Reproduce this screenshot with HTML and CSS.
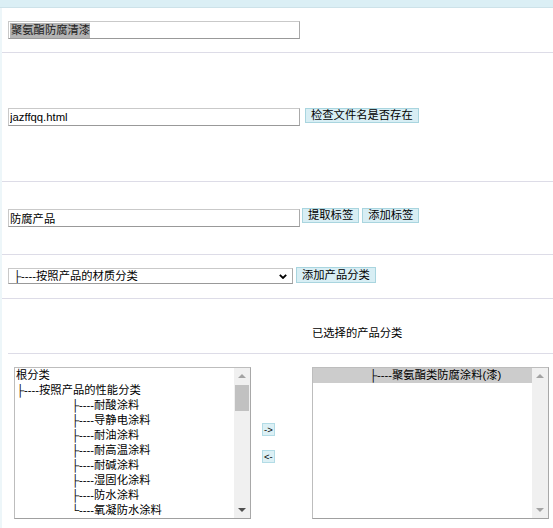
FILE: index.html
```html
<!DOCTYPE html>
<html lang="zh-CN">
<head>
<meta charset="utf-8">
<title>产品编辑</title>
<link rel="stylesheet" href="styles.css">
</head>
<body>
<div class="topbar"></div>
<main class="form">
  <div class="row row-title">
    <div class="field field-title"><span class="sel">聚氨酯防腐清漆</span></div>
  </div>
  <div class="row row-file">
    <input class="field" type="text" value="jazffqq.html">
    <button class="btn btn-check" type="button">检查文件名是否存在</button>
  </div>
  <div class="row row-tags">
    <input class="field" type="text" value="防腐产品">
    <button class="btn btn-tag1" type="button">提取标签</button>
    <button class="btn btn-tag2" type="button">添加标签</button>
  </div>
  <div class="row row-cat">
    <div class="select-wrap">
      <select class="select"><option>├----按照产品的材质分类</option></select>
      <svg class="chev" viewBox="0 0 8 5" width="8" height="5"><polyline points="0.8,0.8 4,4 7.2,0.8" fill="none" stroke="#000" stroke-width="1.8"/></svg>
    </div>
    <button class="btn btn-addcat" type="button">添加产品分类</button>
  </div>
  <div class="picker">
    <div class="picker-head">
      <div></div>
      <div class="picker-title">已选择的产品分类</div>
    </div>
    <div class="picker-body">
      <div class="listbox listbox-left">
        <div class="lb-items">
          <div class="opt">根分类</div>
          <div class="opt">├----按照产品的性能分类</div>
          <div class="opt l2">├----耐酸涂料</div>
          <div class="opt l2">├----导静电涂料</div>
          <div class="opt l2">├----耐油涂料</div>
          <div class="opt l2">├----耐高温涂料</div>
          <div class="opt l2">├----耐碱涂料</div>
          <div class="opt l2">├----湿固化涂料</div>
          <div class="opt l2">├----防水涂料</div>
          <div class="opt l2">└----氧凝防水涂料</div>
        </div>
        <div class="sb">
          <div class="sb-btn"><span class="arr-up"></span></div>
          <div class="sb-track"><div class="thumb"></div></div>
          <div class="sb-btn"><span class="arr-down dark"></span></div>
        </div>
      </div>
      <div class="movers">
        <button class="mv" type="button">-&gt;</button>
        <button class="mv" type="button">&lt;-</button>
      </div>
      <div class="listbox listbox-right">
        <div class="lb-items">
          <div class="opt l2 selected">├----聚氨酯类防腐涂料(漆)</div>
        </div>
        <div class="sb">
          <div class="sb-btn"><span class="arr-up"></span></div>
          <div class="sb-track"></div>
          <div class="sb-btn"><span class="arr-down"></span></div>
        </div>
      </div>
    </div>
  </div>
</main>
</body>
</html>
```

FILE: styles.css
```css
body {
  margin: 0;
  font-family: "Liberation Sans", "Noto Sans CJK SC", sans-serif;
  font-size: 11.3px;
  color: #000;
  background: #fff;
}

.topbar {
  height: 7px;
  background: #dbeff5;
  border-bottom: 1px solid #cde2e9;
}

.form {
  border-left: 2px solid #edf6f9;
  min-height: 520px;
}

.row {
  display: flex;
  align-items: flex-start;
  box-sizing: border-box;
  padding-left: 6px;
  border-bottom: 1px solid #dddce7;
}

.row-title { height: 45px; padding-top: 13px; }
.row-file { height: 129px; padding-top: 55px; }
.row-tags { height: 73px; padding-top: 27px; }
.row-cat { height: 44px; padding-top: 13px; }

.field {
  box-sizing: border-box;
  width: 292px;
  height: 18px;
  margin: 0;
  padding: 0 1px;
  border: 1px solid #c9c9c9;
  border-right-color: #aaa;
  border-bottom-color: #999;
  border-radius: 0;
  font: inherit;
  line-height: 16px;
  color: #000;
  background: #fff;
  outline: none;
}

.field-title {
  display: block;
}

.sel {
  display: inline-block;
  vertical-align: top;
  height: 15px;
  line-height: 15px;
  margin-top: 1px;
  padding-left: 1px;
  background: #b4b4b4;
  color: #222;
}

.btn {
  box-sizing: border-box;
  height: 15px;
  margin: 0;
  padding: 0 5px;
  border: 1px solid #a9d5df;
  border-radius: 0;
  background: #d8eef4;
  font: inherit;
  line-height: 13px;
  color: #000;
}

.btn-check { margin-left: 5px; }
.btn-tag1 { margin-left: 2px; margin-top: -1px; }
.btn-tag2 { margin-left: 3px; margin-top: -1px; }
.btn-addcat { margin-left: 3px; margin-top: -1px; height: 16px; line-height: 14px; }

.select-wrap {
  position: relative;
}

.select {
  -webkit-appearance: none;
  appearance: none;
  display: block;
  box-sizing: border-box;
  width: 285px;
  height: 16px;
  margin: 0;
  padding: 0 0 0 4px;
  border: 1px solid #c9c9c9;
  border-right-color: #aaa;
  border-bottom-color: #999;
  border-radius: 0;
  font: inherit;
  line-height: 14px;
  color: #000;
  background: #fff;
}

.chev {
  position: absolute;
  right: 6px;
  top: 6px;
  pointer-events: none;
}

.picker {
  margin-left: 6px;
}

.picker-head {
  display: grid;
  grid-template-columns: 304px 1fr;
  box-sizing: border-box;
  height: 55px;
  padding-top: 27px;
  line-height: 14px;
  border-bottom: 1px solid #dddce7;
}

.picker-body {
  display: grid;
  grid-template-columns: 243px 61px 1fr;
  align-items: start;
  padding-top: 13px;
}

.listbox {
  box-sizing: border-box;
  display: flex;
  width: 237px;
  height: 152px;
  border: 1px solid #bdbdbd;
  border-right-color: #a8a8a8;
  border-bottom-color: #a0a0a0;
  background: #fff;
}

.listbox-left {
  margin-left: 6px;
}

.lb-items {
  flex: 1;
  overflow: hidden;
}

.opt {
  height: 15px;
  line-height: 15px;
  padding-left: 1px;
  white-space: nowrap;
}

.opt.l2 {
  padding-left: 56px;
}

.opt.selected {
  background: #ccc;
}

.sb {
  display: flex;
  flex-direction: column;
  width: 16px;
  background: #f0f0f0;
}

.sb-btn {
  display: flex;
  align-items: center;
  justify-content: center;
  height: 16px;
}

.arr-up,
.arr-down {
  width: 0;
  height: 0;
  border-left: 4px solid transparent;
  border-right: 4px solid transparent;
}

.arr-up {
  border-bottom: 4px solid #a3a3a3;
}

.arr-down {
  border-top: 4px solid #a3a3a3;
}

.arr-down.dark {
  border-top-color: #505050;
}

.sb-track {
  flex: 1;
  padding: 1px 1px 0;
}

.thumb {
  height: 26px;
  background: #c1c1c1;
}

.movers {
  display: flex;
  flex-direction: column;
  align-items: flex-start;
  gap: 14px;
  padding-left: 11px;
  padding-top: 56px;
}

.mv {
  box-sizing: border-box;
  height: 13px;
  margin: 0;
  padding: 0 1px;
  border: 1px solid #b3dce6;
  border-radius: 0;
  background: #dcf0f5;
  font-family: "Liberation Sans", sans-serif;
  font-size: 9.5px;
  line-height: 11px;
  color: #000;
}
```
